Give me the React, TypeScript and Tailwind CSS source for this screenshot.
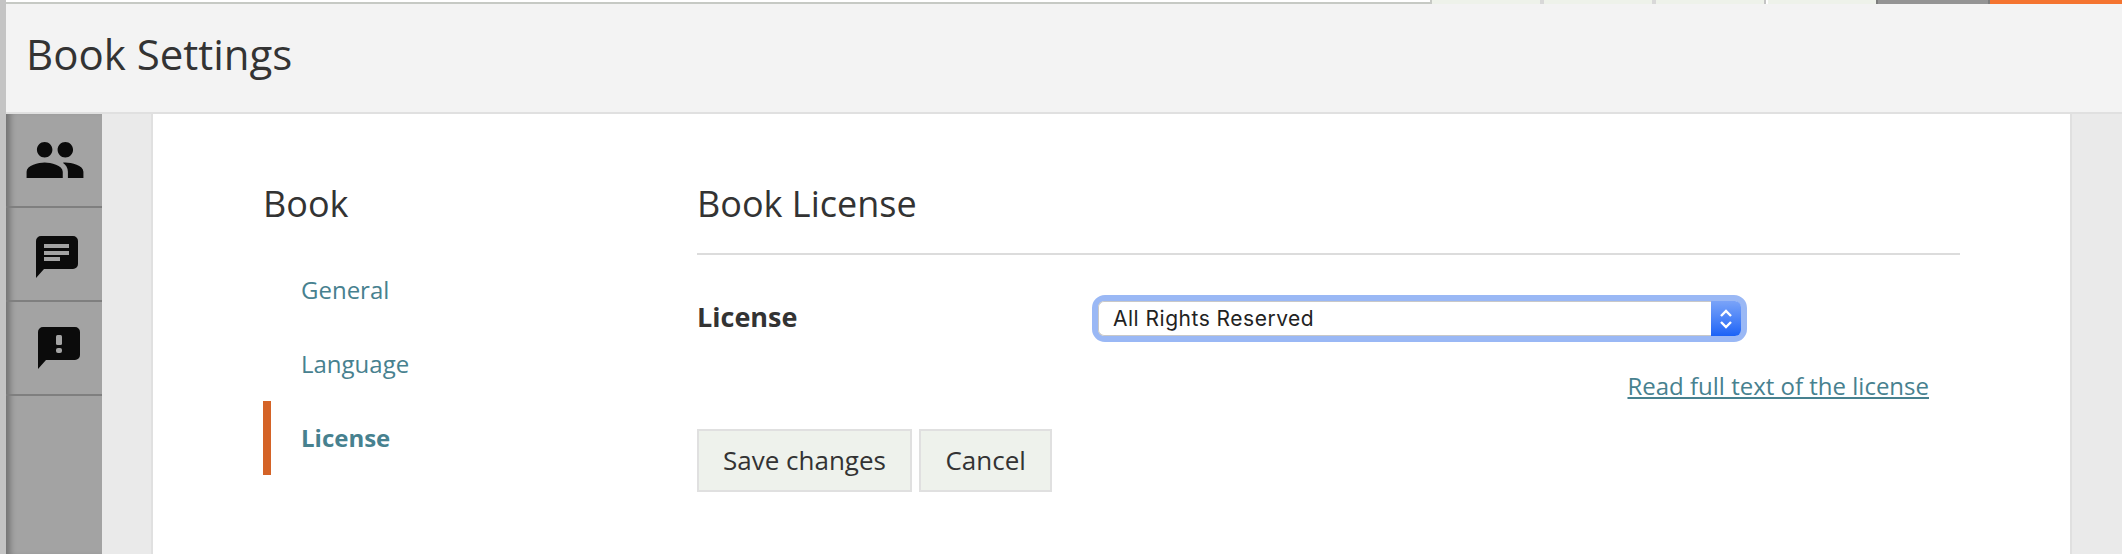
import { MdPeople } from 'react-icons/md';

function ChatIcon() {
    return (
        <svg width="42" height="42" viewBox="0 0 42 42">
            <path d="M5 0H37A5 5 0 0 1 42 5V28A5 5 0 0 1 37 33H8L0 42V5A5 5 0 0 1 5 0Z" fill="#0b0b0b" />
            <rect x="8" y="8" width="25" height="4" fill="#a3a3a3" />
            <rect x="8" y="15" width="25" height="4" fill="#a3a3a3" />
            <rect x="8" y="21" width="16" height="4" fill="#a3a3a3" />
        </svg>
    );
}

function AlertIcon() {
    return (
        <svg width="42" height="42" viewBox="0 0 42 42">
            <path d="M5 0H37A5 5 0 0 1 42 5V28A5 5 0 0 1 37 33H8L0 42V5A5 5 0 0 1 5 0Z" fill="#0b0b0b" />
            <rect x="18" y="8" width="6" height="10" rx="1.5" fill="#a3a3a3" />
            <rect x="18" y="21" width="6" height="5" rx="2" fill="#a3a3a3" />
        </svg>
    );
}

export default function App() {
    return (
        <div className="flex h-[554px] w-[2122px] overflow-hidden bg-white font-['Open_Sans',sans-serif] text-[#333]">
            <div className="w-[6px] shrink-0 bg-[#c4c4c4]" />
            <div className="flex min-w-0 flex-1 flex-col">
                {/* top strip */}
                <div className="flex h-[4px] shrink-0">
                    <div className="flex-1 border-b-2 border-r-2 border-[#c6c9c4] bg-white" />
                    <div className="w-[108px] bg-[#eef2ea]" />
                    <div className="w-[4px] bg-[#d8d8d8]" />
                    <div className="w-[108px] bg-[#eef2ea]" />
                    <div className="w-[4px] bg-[#d8d8d8]" />
                    <div className="w-[108px] bg-[#eef2ea]" />
                    <div className="w-[4px] border-l-2 border-[#c4c4c4] bg-white" />
                    <div className="w-[108px] bg-[#eef2ea]" />
                    <div className="w-[114px] border-x-2 border-[#7d7d7d] bg-[#949494]" />
                    <div className="w-[132px] bg-[#f47430]" />
                </div>
                <div className="flex h-[110px] shrink-0 items-center border-b-2 border-[#e0e0e0] bg-[#f3f3f3] pb-[8px] pl-[20px]">
                    <h1 className="text-[42px] leading-none text-[#333]">Book Settings</h1>
                </div>

                <div className="flex min-h-0 flex-1">
                    {/* dock */}
                    <div className="flex w-[96px] shrink-0 flex-col bg-[#a3a3a3] shadow-[inset_8px_0_6px_-4px_rgba(0,0,0,0.3)]">
                        <div className="flex h-[94px] items-center justify-center border-b-2 border-[#7f7f7f] pl-[2px]">
                            <MdPeople size={62} color="#0b0b0b" />
                        </div>
                        <div className="flex h-[94px] items-center justify-center border-b-2 border-[#7f7f7f] pl-[5px] pt-[5px]">
                            <ChatIcon />
                        </div>
                        <div className="flex h-[94px] items-center justify-center border-b-2 border-[#7f7f7f] pb-[1px] pl-[9px]">
                            <AlertIcon />
                        </div>
                    </div>
                    <div className="w-[51px] shrink-0 border-r-2 border-[#e0e0e0] bg-[#eaeaea]" />

                    {/* page */}
                    <div className="flex min-w-0 flex-1 bg-white pl-[110px] pr-[110px]">
                        <div className="w-[434px] shrink-0">
                            <h2 className="mt-[67px] text-[36px] leading-[46px] text-[#333]">Book</h2>
                            <ul className="mt-[26px]">
                                <li className="flex h-[74px] items-center pl-[38px] text-[24px] text-[#47818f]">General</li>
                                <li className="flex h-[74px] items-center pl-[38px] text-[24px] text-[#47818f]">Language</li>
                                <li className="flex h-[74px] items-center border-l-[8px] border-[#d46327] pl-[30px] text-[24px] font-bold text-[#47818f]">License</li>
                            </ul>
                        </div>
                        <div className="min-w-0 flex-1">
                            <h2 className="mt-[67px] border-b-2 border-[#dcdcdc] pb-[26px] text-[36px] leading-[46px] text-[#333]">Book License</h2>
                            <div className="mt-[40px] flex items-center">
                                <label className="w-[395px] shrink-0 pb-[3px] text-[27px] font-bold leading-[44px] text-[#333]">License</label>
                                <div className="flex h-[47px] w-[655px] rounded-[13px] border-[6px] border-[#9ab8f5]">
                                    <div className="flex min-w-0 flex-1 items-center rounded-l-[6px] border border-r-0 border-[#c8c8c8] bg-white pl-[14px] font-['Inter',sans-serif] text-[21px] tracking-[0.5px] text-[#222]">
                                        All Rights Reserved
                                    </div>
                                    <div className="flex w-[30px] items-center justify-center rounded-r-[6px] bg-gradient-to-b from-[#7aa3f8] to-[#1a62f6]">
                                        <svg width="14" height="24" viewBox="0 0 14 24" fill="none" stroke="#fff" strokeWidth="2.4">
                                            <path d="M2 9L7 4L12 9" />
                                            <path d="M2 15L7 20L12 15" />
                                        </svg>
                                    </div>
                                </div>
                            </div>
                            <div className="mt-[27px] pr-[31px] text-right">
                                <a className="text-[24px] leading-[34px] text-[#47818f] underline">Read full text of the license</a>
                            </div>
                            <div className="mt-[26px] flex gap-[7px]">
                                <button className="h-[63px] border-2 border-[#e0e0e0] bg-[#eef2ec] px-[24px] text-[26px] text-[#333]">Save changes</button>
                                <button className="h-[63px] border-2 border-[#e0e0e0] bg-[#eef2ec] px-[24.5px] text-[26px] text-[#333]">Cancel</button>
                            </div>
                        </div>
                    </div>

                    <div className="w-[52px] shrink-0 border-l-2 border-[#e0e0e0] bg-[#eaeaea]" />
                </div>
            </div>
        </div>
    );
}
